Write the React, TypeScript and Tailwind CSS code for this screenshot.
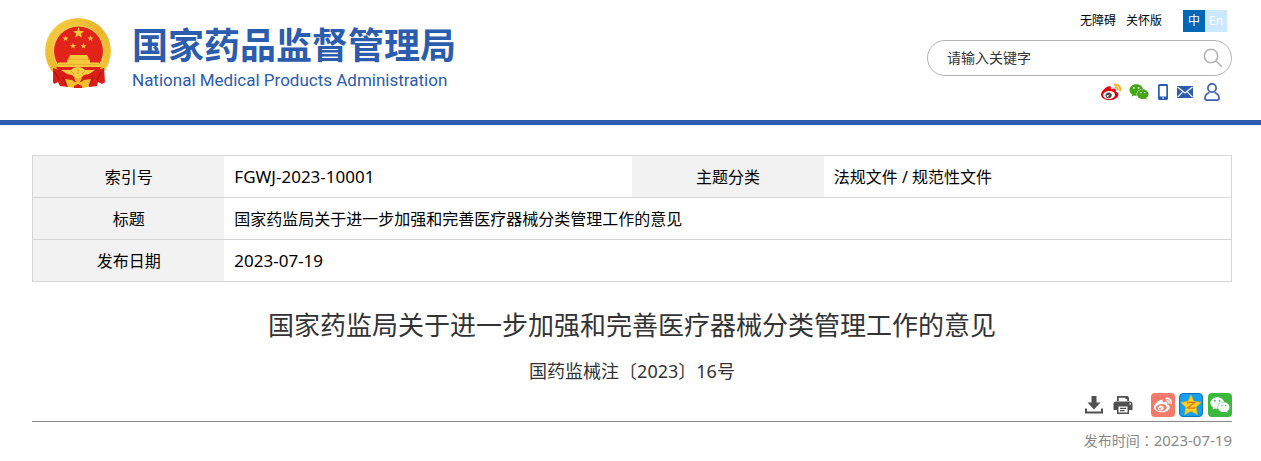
import { FaWeixin } from 'react-icons/fa'

const cjk = "font-['Noto_Sans','Noto_Sans_CJK_SC',sans-serif]"

const actions = 'flex h-6 w-6 items-center justify-center rounded-sm'

function star(cx: number, cy: number, r: number) {
  return Array.from({ length: 10 }, (_, i) => {
    const radius = i % 2 ? r * 0.4 : r
    const a = (Math.PI * i) / 5 - Math.PI / 2
    return `${cx + radius * Math.cos(a)},${cy + radius * Math.sin(a)}`
  }).join(' ')
}

function Emblem() {
  return (
    <svg width="66" height="70" viewBox="0 0 66 70" aria-hidden="true">
      <defs>
        <linearGradient id="gold" x1="0" y1="0" x2="1" y2="1">
          <stop offset="0" stopColor="#f8d548" />
          <stop offset="0.5" stopColor="#e9b62c" />
          <stop offset="1" stopColor="#f7cf3e" />
        </linearGradient>
      </defs>
      <circle cx="33" cy="33" r="33" fill="url(#gold)" />
      <circle cx="33" cy="33" r="30" fill="none" stroke="#d99e20" strokeWidth="1.500" strokeDasharray="1.500 2" opacity="0.3" />
      <circle cx="33.500" cy="33" r="25" fill="#e2231a" stroke="#f9dc5c" strokeWidth="1" />
      <g fill="#f7c93a">
        <polygon points={star(33.5, 15, 6)} />
        <polygon points={star(20.5, 20.5, 3.2)} />
        <polygon points={star(45.5, 20.5, 3.2)} />
        <polygon points={star(28, 28, 3.2)} />
        <polygon points={star(38.5, 28, 3.2)} />
        <path d="M25 37h17l2 3.500H23zM24 40h19v2H24zM22 41.500h23v3h9V49H13v-4.500h9z" />
      </g>
      <path d="M13 46.500h41M23 41.200h21" stroke="#e39a25" strokeWidth="0.6" />
      <path d="M11 49h45l-5 8H16z" fill="#dd2019" />
      <path d="M8 50l9 3 12 1 4 2 4-2 12-1 10-3 1 14-3 2-4-2-1 4-8 1-3-4H26l-3 4-8-1-2-4-4 2-1-2z" fill="#d91d17" />
      <path d="M10 54l4 8M18 59l3 8M56 54l-4 8M48 59l-3 8" stroke="#b3140f" strokeWidth="1.200" />
      <path d="M16 52l10 0c3-4 11-4 14 0h10l-6 4-5 1-3 3h-6l-3-3-5-1z" fill="#f7cd40" />
      <path d="M29 56l-3-3M33 56v-5M37 56l3-3" stroke="#d48b20" strokeWidth="0.8" />
      <path d="M20 61l7 1 3 2h6l3-2 7-1-3 8-6 1-4-2-4 2-6-1z" fill="#f2bf31" />
      <path d="M29 60h8l-2 4h-4z" fill="#eeb52b" />
      <path d="M29 68l4-2 4 2v2h-8z" fill="#d91d17" />
    </svg>
  )
}

type WeiboProps = { size: number; body: string; eye: string; waves: string }

function Weibo({ size, body, eye, waves }: WeiboProps) {
  return (
    <svg width={size} height={size} viewBox="0 0 24 24" aria-hidden="true">
      <path
        fill={body}
        d="M10.098 20.323c-3.977.391-7.414-1.406-7.672-4.02-.259-2.609 2.759-5.047 6.74-5.441 3.979-.394 7.413 1.404 7.671 4.018.259 2.6-2.759 5.049-6.737 5.439l-.002.004zM18.059 11.649c-.346-.105-.57-.18-.405-.615.375-.977.42-1.804 0-2.404-.781-1.112-2.915-1.053-5.364-.03 0 0-.766.331-.571-.271.376-1.217.315-2.224-.27-2.809-1.338-1.337-4.869.045-7.888 3.08C1.309 10.87 0 13.273 0 15.348c0 3.981 5.099 6.395 10.086 6.395 6.536 0 10.888-3.801 10.888-6.82 0-1.822-1.547-2.854-2.915-3.284v.01z"
      />
      <path
        fill={eye}
        d="M9.05 17.219c-.384.616-1.208.884-1.829.602-.612-.279-.793-.991-.406-1.593.379-.595 1.176-.861 1.793-.601.622.263.82.972.442 1.592zm1.27-1.627c-.141.237-.449.353-.689.253-.236-.09-.313-.361-.177-.586.138-.227.436-.346.672-.24.239.09.315.36.18.601l.014-.028zm.176-2.719c-1.893-.493-4.033.45-4.857 2.118-.836 1.704-.026 3.591 1.886 4.21 1.983.64 4.318-.341 5.132-2.179.8-1.793-.201-3.642-2.161-4.149z"
      />
      <path
        fill={waves}
        d="M19.967 6.557c-.766-.856-1.908-1.187-2.96-.962-.436.09-.706.511-.616.932.09.42.511.691.932.602.511-.105 1.067.044 1.442.465.376.421.466.977.316 1.473-.136.406.089.856.51.992.405.119.857-.105.992-.512.33-1.021.12-2.178-.646-3.035l.03.045zm2.418-2.195c-1.576-1.757-3.905-2.419-6.054-1.968-.496.104-.812.587-.706 1.081.104.496.586.813 1.082.707 1.532-.331 3.185.15 4.296 1.383 1.112 1.246 1.429 2.943.947 4.416-.165.48.106 1.007.586 1.157.479.165.991-.104 1.157-.586.675-2.088.241-4.478-1.338-6.235l.03.045z"
        stroke={waves}
        strokeWidth="0.5"
      />
    </svg>
  )
}

function Header() {
  return (
    <header className="flex h-[125px] items-start justify-between border-b-5 border-[#2b5cad] pr-[29px] pl-[45px]">
      <a href="#" className="flex gap-[21px] pt-[18px] text-[#2b5cad]">
        <Emblem />
        <span className="flex flex-col pt-2">
          <span className="text-4xl leading-10 font-bold whitespace-nowrap">国家药品监督管理局</span>
          <span className="font-[Roboto,sans-serif] text-[17px] leading-7 whitespace-nowrap">
            National Medical Products Administration
          </span>
        </span>
      </a>

      <div className="flex w-[305px] flex-col">
        <div className="flex items-center justify-end gap-[10px] pt-[10px] pr-[5px] text-xs text-black">
          <a href="#">无障碍</a>
          <a href="#">关怀版</a>
          <div className="ml-[11px] flex text-center leading-[22px] text-white">
            <a href="#" className="w-[22px] bg-[#0068b7]">中</a>
            <a href="#" className="w-[22px] bg-[#cce8ff]">En</a>
          </div>
        </div>

        <form className="mt-2 flex h-9 items-center rounded-full border border-[#b3b3b3] pr-2 pl-[19px]">
          <input
            type="text"
            aria-label="请输入关键字"
            placeholder="请输入关键字"
            className="min-w-0 flex-1 text-sm text-black outline-none placeholder:text-[#333]"
          />
          <button type="submit" aria-label="搜索">
            <svg width="20" height="20" viewBox="0 0 20 20" fill="none" stroke="#b3b3b3" strokeWidth="1.600">
              <circle cx="8" cy="8" r="6.700" />
              <path d="M12.800 12.800l6 6" />
            </svg>
          </button>
        </form>

        <div className="flex h-8 items-center justify-end pr-3">
          <a href="#" aria-label="微博" className="mr-2">
            <Weibo size={20} body="#e50012" eye="#444" waves="#f0a818" />
          </a>
          <a href="#" aria-label="微信" className="mr-2 text-[#45a715]">
            <FaWeixin size={20} />
          </a>
          <a href="#" aria-label="手机" className="mr-2">
            <svg width="12" height="16" viewBox="0 0 12 16">
              <path fill="#2b5cad" fillRule="evenodd" d="M2.500 0h7A1.500 1.500 0 0 1 11 1.500v13A1.500 1.500 0 0 1 9.500 16h-7A1.500 1.500 0 0 1 1 14.500v-13A1.500 1.500 0 0 1 2.500 0zM2.700 2v10.500h6.600V2zM5 13.500v1h2v-1z" />
            </svg>
          </a>
          <a href="#" aria-label="邮箱" className="mr-[11px]">
            <svg width="16" height="12" viewBox="0 0 16 12">
              <rect width="16" height="12" fill="#2b5cad" />
              <path d="M.5 1l7.500 6 7.500-6M.5 11.200l5-5M15.500 11.200l-5-5" fill="none" stroke="#fff" strokeWidth="1.200" />
            </svg>
          </a>
          <a href="#" aria-label="个人中心">
            <svg width="16" height="18" viewBox="0 0 16 18" fill="none" stroke="#3f5fb5" strokeWidth="1.700">
              <circle cx="8" cy="5" r="4.100" />
              <path d="M5.500 9.500C2.500 10.500 1 12.500 1 15.200c0 1.300.6 1.900 1.800 1.900h10.400c1.200 0 1.800-.6 1.800-1.900 0-2.700-1.500-4.700-4.500-5.700" />
            </svg>
          </a>
        </div>
      </div>
    </header>
  )
}

function InfoTable() {
  const th = 'bg-[#f2f2f2] text-center font-normal'
  const td = 'pl-[10px]'

  return (
    <table className="w-full table-fixed border-collapse border border-[#d6d6d6] text-base text-black">
      <colgroup>
        <col className="w-[16%]" />
        <col className="w-[34%]" />
        <col className="w-[16%]" />
        <col className="w-[34%]" />
      </colgroup>
      <tbody>
        <tr className="h-[42px] border-b border-[#d6d6d6]">
          <th scope="row" className={th}>索引号</th>
          <td className={`${td} text-[17px]`}>FGWJ-2023-10001</td>
          <th scope="row" className={th}>主题分类</th>
          <td className={td}>法规文件 / 规范性文件</td>
        </tr>
        <tr className="h-[42px] border-b border-[#d6d6d6]">
          <th scope="row" className={th}>标题</th>
          <td colSpan={3} className={td}>国家药监局关于进一步加强和完善医疗器械分类管理工作的意见</td>
        </tr>
        <tr className="h-[42px]">
          <th scope="row" className={th}>发布日期</th>
          <td colSpan={3} className={`${td} text-[17px]`}>2023-07-19</td>
        </tr>
      </tbody>
    </table>
  )
}

function ActionBar() {
  return (
    <div className="flex items-center justify-end border-b border-[#888] pb-1">
      <button type="button" aria-label="下载" className="mr-[9px]">
        <svg width="20" height="20" viewBox="0 0 20 20" fill="#505050">
          <path d="M7.500 1h5v6.500h4L10 14.500 3.500 7.500h4zM1 13.500h2v3h14v-3h2V18.500H1z" />
        </svg>
      </button>
      <button type="button" aria-label="打印" className="mr-[18px]">
        <svg width="20" height="20" viewBox="0 0 20 20" fill="#505050">
          <path fillRule="evenodd" d="M4 1h10.500L16 2.500V6H4zM5.800 2.800V6h8.400V4h-1.700V2.800z" />
          <path
            fillRule="evenodd"
            d="M3 6.500h14a2.500 2.500 0 0 1 2.500 2.500v6H16v4H4v-4H.5V9A2.500 2.500 0 0 1 3 6.500zM5.500 11.500v6h9v-6zM16.500 8.300v1.400H18V8.300z"
          />
          <path d="M7 12.700h6v1.300H7zM7 15h4.500v1.300H7z" />
        </svg>
      </button>
      <div className="flex gap-1">
        <a href="#" aria-label="分享到微博" className={`${actions} bg-[#f67a6b]`}>
          <Weibo size={18} body="#fff" eye="#fff" waves="#fff" />
        </a>
        <a href="#" aria-label="分享到QQ空间" className={`${actions} border border-[#0a73b9] bg-[#14a0f0]`}>
          <svg width="22" height="22" viewBox="0 0 22 22">
            <path
              d="M11 1l3 6.500 7 .9-5 4.800 1.200 7.200-6.200-3.500-6.200 3.500L6 13.200 1 8.400l7-.9z"
              fill="#ffd024"
              stroke="#f5b800"
              strokeWidth="0.8"
              strokeLinejoin="round"
            />
            <path d="M7 8.800c2.500-.5 5-.5 7.500-.1l-6.700 5.100c2.500.5 5 .4 7.600-.2" fill="none" stroke="#d9741c" strokeWidth="1.400" />
          </svg>
        </a>
        <a href="#" aria-label="分享到微信" className={`${actions} ml-px bg-[#3cb83c] text-white`}>
          <FaWeixin size={20} />
        </a>
      </div>
    </div>
  )
}

export default function App() {
  return (
    <div className={`min-h-screen bg-white ${cjk}`}>
      <Header />
      <main className="pt-[30px] pr-[29px] pl-8">
        <InfoTable />
        <h1 className="pt-[23px] text-center text-[26px] leading-10 text-[#333]">
          国家药监局关于进一步加强和完善医疗器械分类管理工作的意见
        </h1>
        <p className="pt-3 pb-2 text-center text-lg text-[#333]">国药监械注〔2023〕16号</p>
        <ActionBar />
        <p className="pt-[6px] text-right font-['Noto_Sans','Noto_Sans_CJK_TC',sans-serif] text-sm leading-6 text-[#888]">
          <span lang="zh-TW">发布时间：</span>
          <time dateTime="2023-07-19" className="text-[15px]">2023-07-19</time>
        </p>
      </main>
    </div>
  )
}
